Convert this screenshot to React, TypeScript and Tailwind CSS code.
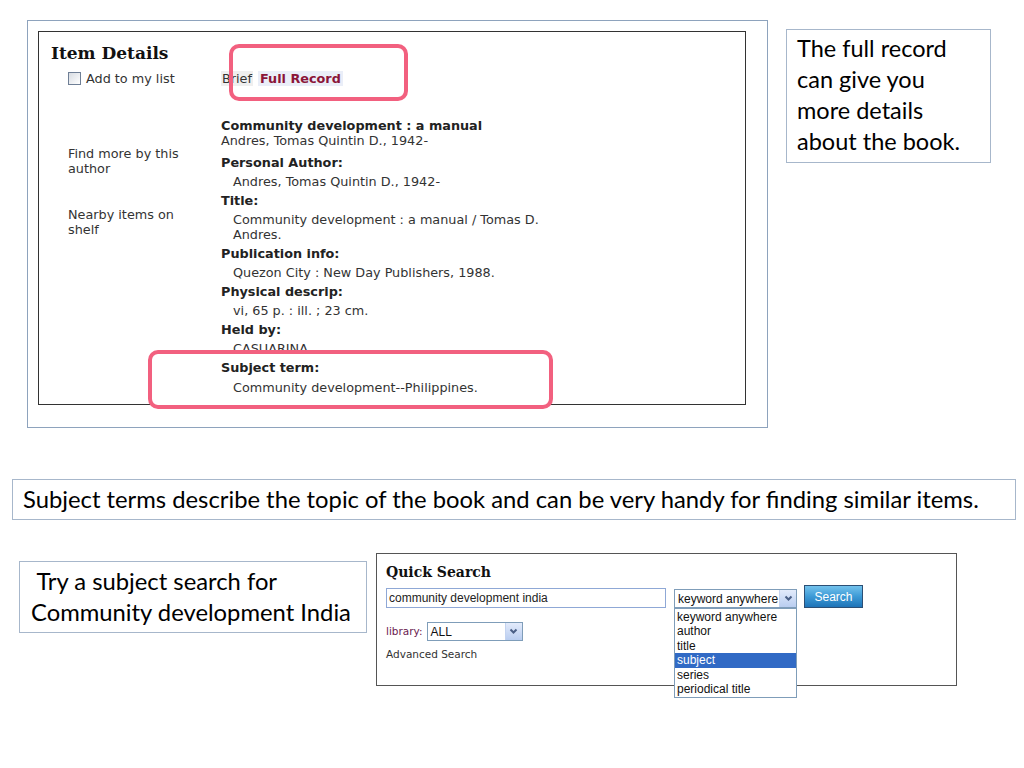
import React from "react";

const verdana = "font-['DejaVu_Sans','Verdana',sans-serif]";
const serifH = "font-['DejaVu_Serif','Georgia',serif]";
const calibri = "font-['Lato','Open_Sans',sans-serif]";
const arial = "font-['Liberation_Sans','Arial',sans-serif]";

function Chevron() {
  return (
    <span className="flex h-full w-[17px] items-center justify-center border-l border-[#c3d3f0] bg-gradient-to-b from-[#e3ebfb] to-[#b9cdf0]">
      <svg width="9" height="7" viewBox="0 0 9 7">
        <path d="M1.5 1.5 L4.5 4.5 L7.5 1.5" fill="none" stroke="#4a5f86" strokeWidth="2" />
      </svg>
    </span>
  );
}

function Field({ label, children }: { label: string; children: React.ReactNode }) {
  return (
    <>
      <div className="mt-[4px] h-[15px] font-bold text-[#222]">{label}</div>
      <div className="mt-[4px] pl-[12px]">{children}</div>
    </>
  );
}

export default function App() {
  return (
    <div className="relative h-[768px] w-[1024px] overflow-hidden bg-white">
      {/* Row 1 */}
      <div className="flex items-start pt-[20px]">
        <div className="ml-[27px] h-[408px] w-[741px] border border-[#8ea3bd] bg-white p-[10px]">
          <div className={`relative flex h-[374px] w-[708px] border border-[#333] pt-[12px] pl-[12px] text-[12.8px] leading-[15px] text-[#333] ${verdana}`}>
            {/* left column */}
            <div className="w-[170px] shrink-0">
              <div className={`-mt-[2px] h-[22px] text-[17px] leading-[22px] font-bold text-[#111] ${serifH}`}>Item Details</div>
              <div className="mt-[7px] flex h-[15px] items-center pl-[17px]">
                <span className="h-[13px] w-[13px] border border-[#6f7f96] bg-gradient-to-br from-[#d8dce2] to-white" />
                <span className="ml-[5px] text-[#333]">Add to my list</span>
              </div>
              <div className="mt-[61px] pl-[17px] leading-[14.5px]">
                Find more by this
                <br />
                author
              </div>
              <div className="mt-[32px] pl-[17px] leading-[14.5px]">
                Nearby items on
                <br />
                shelf
              </div>
            </div>
            {/* right column */}
            <div className="flex-1">
              <div className="mt-[26px] flex h-[17px] items-center gap-[5px]">
                <span className="bg-[#efefef] px-[1px] text-[#333]">Brief</span>
                <span className="bg-[#eaeef8] px-[2px] font-bold text-[#8b1538]">Full Record</span>
              </div>
              <div className="mt-[31px] font-bold text-[#222]">Community development : a manual</div>
              <div>Andres, Tomas Quintin D., 1942-</div>
              <div className="mt-[7px]" />
              <Field label="Personal Author:">Andres, Tomas Quintin D., 1942-</Field>
              <Field label="Title:">
                Community development : a manual / Tomas D.
                <br />
                Andres.
              </Field>
              <Field label="Publication info:">Quezon City : New Day Publishers, 1988.</Field>
              <Field label="Physical descrip:">vi, 65 p. : ill. ; 23 cm.</Field>
              <Field label="Held by:">CASUARINA</Field>
              <div className="relative z-20 mt-[4px] h-[15px] font-bold text-[#222]">Subject term:</div>
              <div className="relative z-20 mt-[5px] pl-[12px]">Community development--Philippines.</div>
            </div>
            {/* highlight boxes */}
            <div className="pointer-events-none absolute left-[190px] top-[12px] z-10 h-[57px] w-[179px] rounded-[10px] border-[4px] border-[#f2607f]" />
            <div className="pointer-events-none absolute left-[109px] top-[318px] z-10 h-[59px] w-[405px] rounded-[10px] border-[4px] border-[#f2607f] bg-white" />
          </div>
        </div>
        <div className={`ml-[18px] mt-[9px] h-[134px] w-[205px] border border-[#a7b7cb] pl-[10px] pt-[3px] text-[23.5px] leading-[31px] text-black ${calibri}`}>
          The full record
          <br />
          can give you
          <br />
          more details
          <br />
          about the book.
        </div>
      </div>

      {/* Row 2 */}
      <div className={`ml-[12px] mt-[51px] flex h-[41px] w-[1004px] items-center border border-[#a7b7cb] pl-[10px] text-[23.8px] text-black ${calibri}`}>
        Subject terms describe the topic of the book and can be very handy for finding similar items.
      </div>

      {/* Row 3 */}
      <div className="mt-[33px] flex items-start">
        <div className={`ml-[19px] mt-[8px] h-[72px] w-[348px] border border-[#a7b7cb] pl-[11px] pt-[4px] text-[23.8px] leading-[31px] text-black ${calibri}`}>
          &nbsp;Try a subject search for
          <br />
          Community development India
        </div>
        <div className="relative ml-[9px] h-[133px] w-[581px] border border-[#555] bg-white pl-[9px] pt-[8px]">
          <div className={`h-[20px] text-[14px] leading-[20px] font-bold text-[#111] ${serifH}`}>Quick Search</div>
          <div className="mt-[6px] flex items-start">
            <div className={`flex h-[20px] w-[280px] items-center border border-[#8fa8d6] px-[2px] text-[12px] text-[#222] ${arial}`}>
              community development india
            </div>
            <div className="relative ml-[8px] mt-[1px]">
              <div className={`flex h-[19px] w-[123px] items-center justify-between border border-[#7f9db9] bg-white pl-[3px] text-[12px] text-[#111] ${arial}`}>
                <span>keyword anywhere</span>
                <Chevron />
              </div>
              <div className={`absolute left-0 top-full z-20 w-[123px] border border-[#7f9db9] bg-white py-[1px] text-[12px] leading-[14.4px] text-[#111] ${arial}`}>
                <div className="pl-[2px]">keyword anywhere</div>
                <div className="pl-[2px]">author</div>
                <div className="pl-[2px]">title</div>
                <div className="bg-[#316ac5] pl-[2px] text-white">subject</div>
                <div className="pl-[2px]">series</div>
                <div className="pl-[2px]">periodical title</div>
              </div>
            </div>
            <div className={`ml-[7px] -mt-[3px] flex h-[23px] w-[59px] items-center justify-center border border-[#2c4f75] bg-gradient-to-b from-[#72c2ec] via-[#3d9ad6] to-[#1e74b8] text-[12px] text-white ${arial}`}>
              Search
            </div>
          </div>
          <div className={`mt-[14px] flex items-center text-[10.5px] ${verdana}`}>
            <span className="text-[#6b2150]">library:</span>
            <div className={`ml-[4px] flex h-[19px] w-[96px] items-center justify-between border border-[#7f9db9] bg-white pl-[3px] text-[12px] text-[#111] ${arial}`}>
              <span>ALL</span>
              <Chevron />
            </div>
          </div>
          <div className={`mt-[6px] text-[10.5px] text-[#333] ${verdana}`}>Advanced Search</div>
        </div>
      </div>
    </div>
  );
}
